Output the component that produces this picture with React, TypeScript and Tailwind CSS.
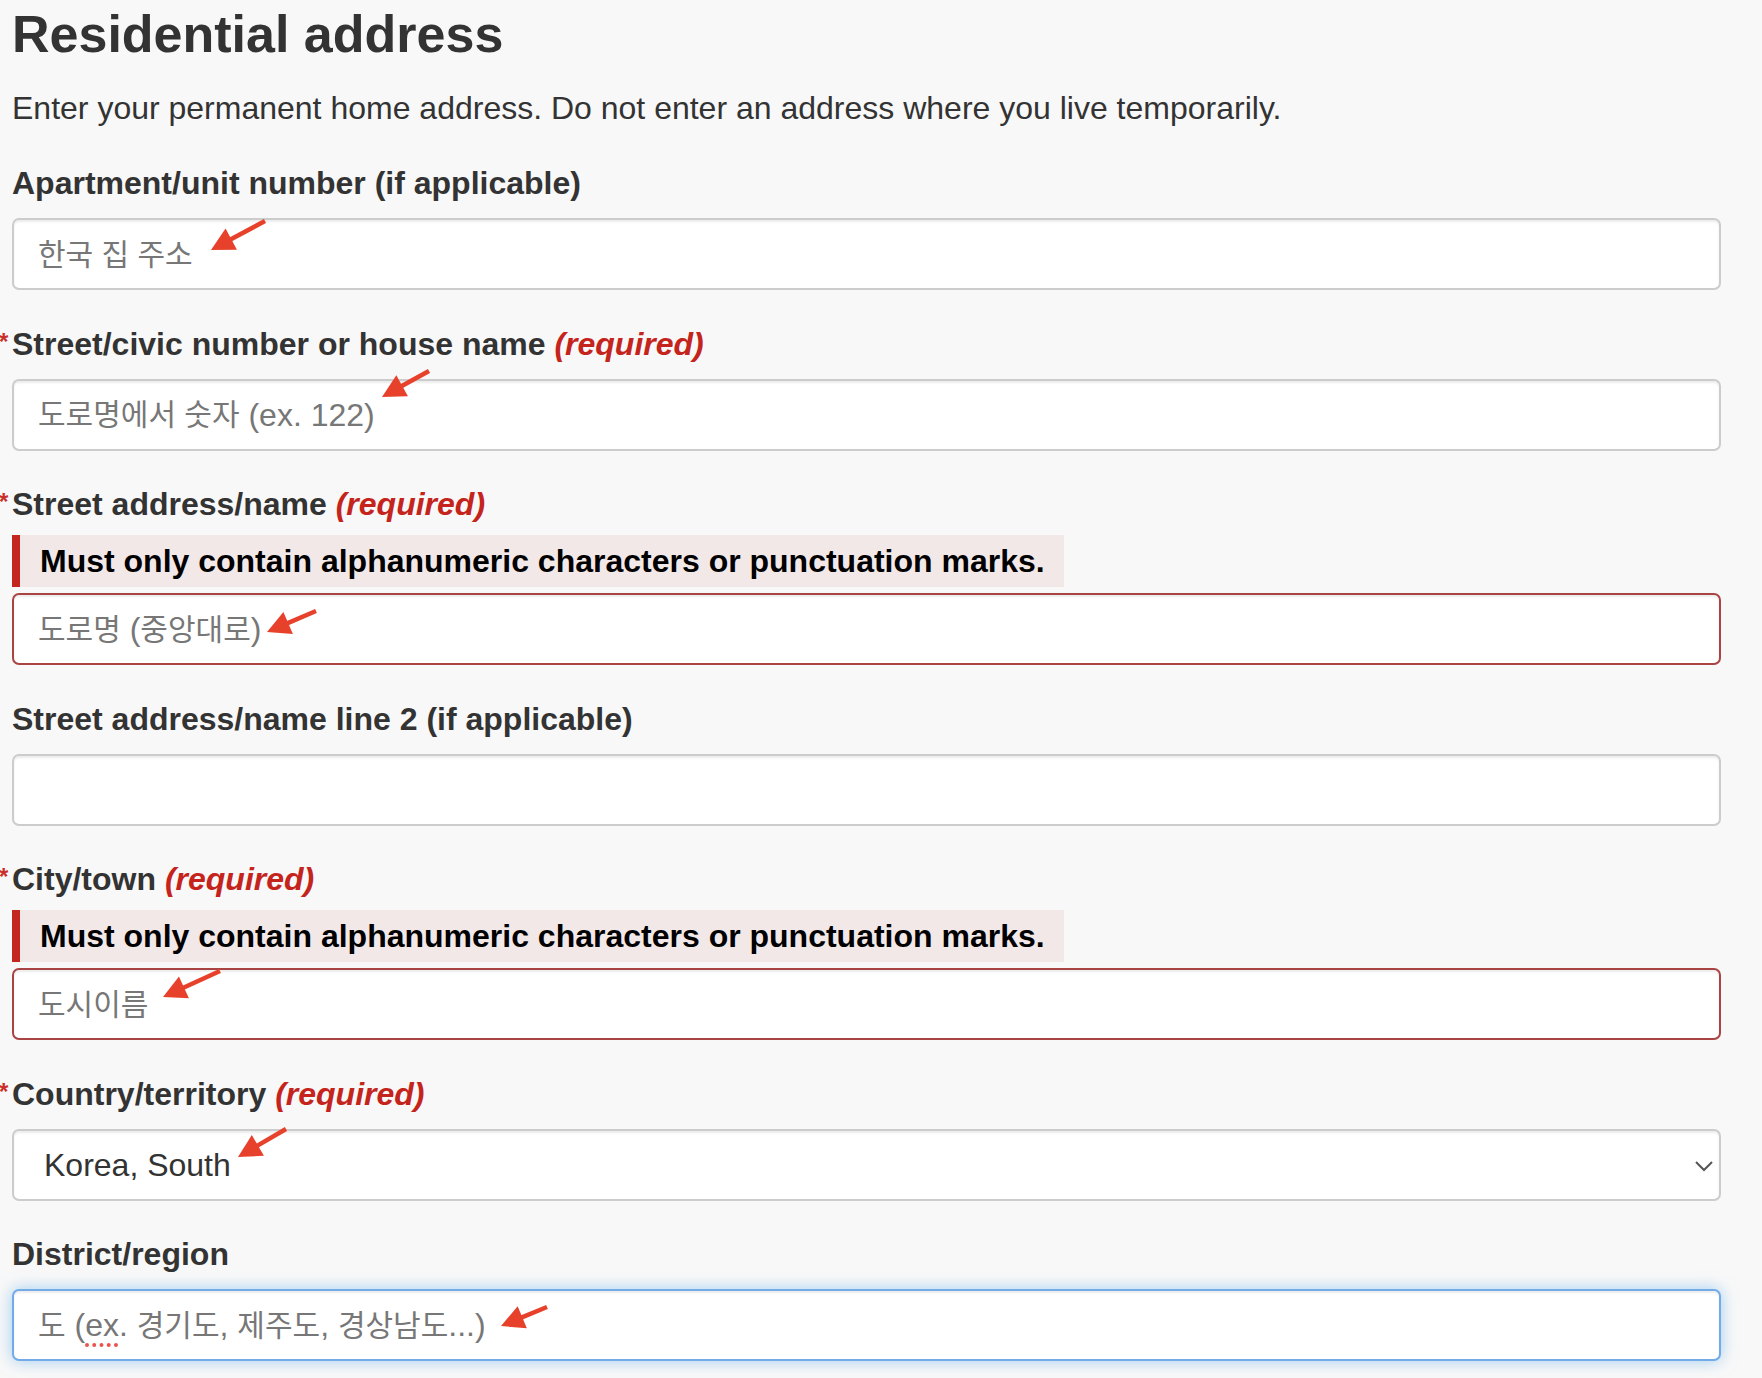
import React from "react";

type Pt = { tip: [number, number]; tail: [number, number] };

function Arrow({ tip, tail }: Pt) {
  const dx = tail[0] - tip[0];
  const dy = tail[1] - tip[1];
  const len = Math.hypot(dx, dy);
  const ux = dx / len;
  const uy = dy / len;
  const px = -uy;
  const py = ux;
  const headLen = 23;
  const half = 12;
  const bx = tip[0] + ux * headLen;
  const by = tip[1] + uy * headLen;
  const v1 = [bx + px * half, by + py * half];
  const v2 = [bx - px * half, by - py * half];
  const sx = bx - ux * 3;
  const sy = by - uy * 3;
  return (
    <svg className="pointer-events-none absolute inset-0 h-full w-full overflow-visible">
      <line x1={sx} y1={sy} x2={tail[0]} y2={tail[1]} stroke="#e8412b" strokeWidth={4.5} />
      <polygon points={`${tip[0]},${tip[1]} ${v1[0]},${v1[1]} ${v2[0]},${v2[1]}`} fill="#e8412b" />
    </svg>
  );
}

function K({ children }: { children: React.ReactNode }) {
  return <span className="text-[30px]">{children}</span>;
}

type FieldProps = {
  label: React.ReactNode;
  required?: boolean;
  error?: boolean;
  last?: boolean;
  children: React.ReactNode;
};

function Field({ label, required, error, last, children }: FieldProps) {
  return (
    <div className={last ? "" : "mb-[33.5px]"}>
      <label className="relative block text-[32px] font-bold leading-[40px] text-[#333333]">
        {required && (
          <span className="absolute left-[-13px] top-[6px] text-[24px] font-bold leading-none text-[#c9302c]">*</span>
        )}
        {label}
        {required && (
          <>
            {" "}
            <strong className="italic text-[#c4241c]">(required)</strong>
          </>
        )}
      </label>
      {error ? (
        <div className="mb-[6px] mt-[11px] h-[52px] w-fit border-l-[8px] border-[#c3261f] bg-[#f2e8e8] pl-[20px] pr-[19px] text-[32px] font-bold leading-[52px] text-black">
          Must only contain alphanumeric characters or punctuation marks.
        </div>
      ) : (
        <div className="h-[15px]" />
      )}
      {children}
    </div>
  );
}

const boxBase =
  "relative flex h-[72px] items-center rounded-[7px] border-2 bg-white text-[32px] whitespace-nowrap";

export default function App() {
  return (
    <div className="min-h-screen bg-[#f8f8f8] pl-3 pr-[41px] pt-1 font-['Liberation_Sans','Noto_Sans_CJK_KR',sans-serif] text-[#333333]">
      <h1 className="text-[52px] font-bold leading-[60px] text-[#333333]">Residential address</h1>
      <p className="mt-[22px] text-[32px] leading-[44px] text-[#333333]">
        Enter your permanent home address. Do not enter an address where you live temporarily.
      </p>

      <form className="mt-[33px]" onSubmit={(e) => e.preventDefault()}>
        <Field label="Apartment/unit number (if applicable)">
          <div className={`${boxBase} border-[#cccccc] pl-[24px] text-[#777777] shadow-[inset_0_2px_2px_rgba(0,0,0,0.075)]`}>
            <K>한국 집 주소</K>
            <Arrow tip={[197, 30]} tail={[251, 1]} />
          </div>
        </Field>

        <Field label="Street/civic number or house name" required>
          <div className={`${boxBase} border-[#cccccc] pl-[24px] text-[#777777] shadow-[inset_0_2px_2px_rgba(0,0,0,0.075)]`}>
            <K>도로명에서 숫자</K>
            <span>&nbsp;(ex. 122)</span>
            <Arrow tip={[368, 16]} tail={[415, -10]} />
          </div>
        </Field>

        <Field label="Street address/name" required error>
          <div className={`${boxBase} border-[#a94442] pl-[24px] text-[#777777] shadow-[inset_0_2px_2px_rgba(0,0,0,0.075)]`}>
            <K>도로명</K>
            <span>&nbsp;(</span>
            <K>중앙대로</K>
            <span>)</span>
            <Arrow tip={[253, 37]} tail={[302, 16]} />
          </div>
        </Field>

        <Field label="Street address/name line 2 (if applicable)">
          <div className={`${boxBase} border-[#cccccc] pl-[24px] text-[#777777] shadow-[inset_0_2px_2px_rgba(0,0,0,0.075)]`} />
        </Field>

        <Field label="City/town" required error>
          <div className={`${boxBase} border-[#a94442] pl-[24px] text-[#777777] shadow-[inset_0_2px_2px_rgba(0,0,0,0.075)]`}>
            <K>도시이름</K>
            <Arrow tip={[149, 27]} tail={[206, 1]} />
          </div>
        </Field>

        <Field label="Country/territory" required>
          <div className={`${boxBase} border-[#cccccc] pl-[30px] text-[#333333] shadow-[inset_0_2px_2px_rgba(0,0,0,0.075)]`}>
            <span>Korea, South</span>
            <svg className="absolute right-[6px] top-[30px] h-[11px] w-[18px]" viewBox="0 0 18 11">
              <polyline points="1,1 9,9 17,1" fill="none" stroke="#555555" strokeWidth={2} />
            </svg>
            <Arrow tip={[224, 26]} tail={[272, -2]} />
          </div>
        </Field>

        <Field label="District/region" last>
          <div className={`${boxBase} border-[#72abe7] pl-[24px] text-[#777777] shadow-[inset_0_2px_2px_rgba(0,0,0,0.075),0_0_16px_rgba(102,175,233,0.6)]`}>
            <K>도</K>
            <span>&nbsp;(</span>
            <span className="underline decoration-[#e8554d] decoration-dotted decoration-[4px] underline-offset-[7px]">ex</span>
            <span>.&nbsp;</span>
            <K>경기도</K>
            <span>,&nbsp;</span>
            <K>제주도</K>
            <span>,&nbsp;</span>
            <K>경상남도</K>
            <span>...)</span>
            <Arrow tip={[487, 35]} tail={[533, 16]} />
          </div>
        </Field>
      </form>
    </div>
  );
}
